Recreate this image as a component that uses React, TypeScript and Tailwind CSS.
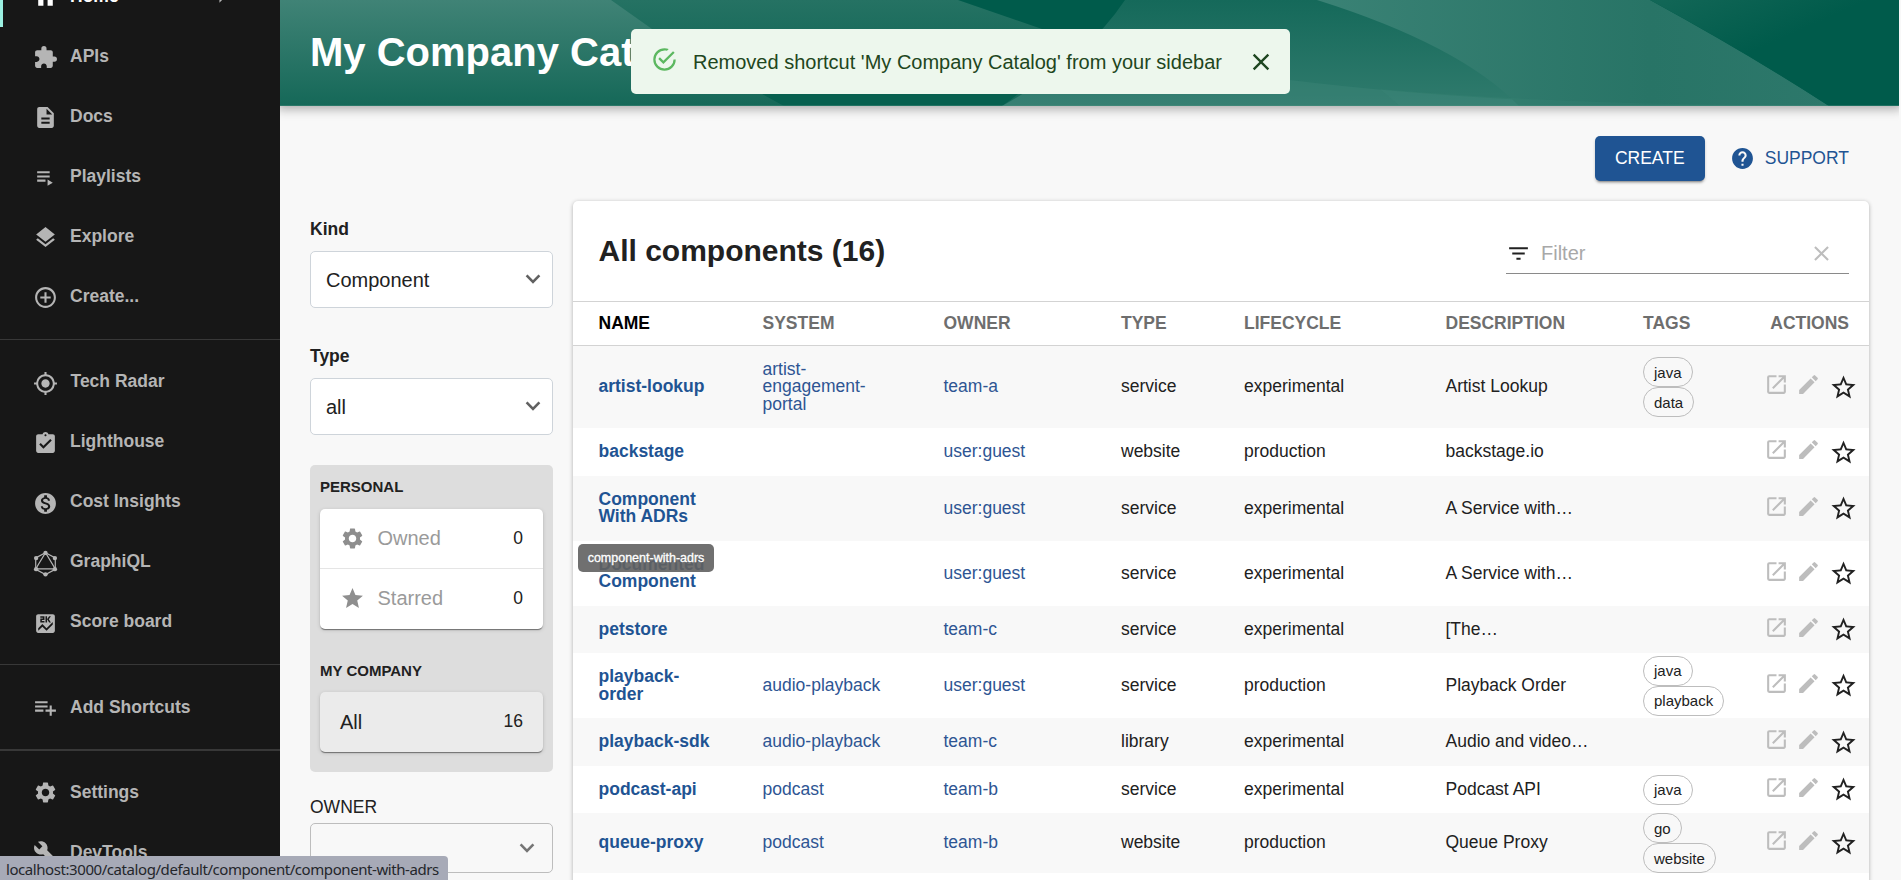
import React from 'react';
import {
  MdAddCircleOutline, MdArrowRight, MdAssignmentTurnedIn, MdBuild, MdClear, MdDescription, MdEdit,
  MdExtension, MdFilterList, MdHelp, MdHome, MdLayers, MdMonetizationOn, MdMyLocation,
  MdOpenInNew, MdScore, MdSettings, MdStar,
} from 'react-icons/md';

type IconType = React.ComponentType<{ className?: string }>;

const PlaylistPlay: IconType = ({ className }) => (
  <svg viewBox="0 0 24 24" fill="currentColor" className={className}>
    <path d="M4 10h12v2H4zm0-4h12v2H4zm0 8h8v2H4zm10 0v6l5-3z" />
  </svg>
);

const PlaylistAdd: IconType = ({ className }) => (
  <svg viewBox="0 0 24 24" fill="currentColor" className={className}>
    <path d="M14 10H2v2h12v-2zm0-4H2v2h12V6zm4 8v-4h-2v4h-4v2h4v4h2v-4h4v-2h-4zM2 16h8v-2H2v2z" />
  </svg>
);

const GraphiQL: IconType = ({ className }) => (
  <svg viewBox="0 0 24 24" className={className} overflow="visible">
    <g fill="none" stroke="currentColor" strokeWidth="1.1">
      <path d="M12 1.6 21.4 6.6V17.6L12 22.6 2.6 17.6V6.6Z" />
      <path d="M12 1.6 21.4 17.2H2.6Z" />
    </g>
    <g fill="currentColor">
      <circle cx="12" cy="1.8" r="2.1" />
      <circle cx="21" cy="6.8" r="2.1" />
      <circle cx="21" cy="17.4" r="2.1" />
      <circle cx="12" cy="22.4" r="2.1" />
      <circle cx="3" cy="17.4" r="2.1" />
      <circle cx="3" cy="6.8" r="2.1" />
    </g>
  </svg>
);

const StarBorder: IconType = ({ className }) => (
  <svg viewBox="0 0 24 24" fill="currentColor" className={className}>
    <path d="M22 9.24l-7.19-.62L12 2 9.19 8.63 2 9.24l5.46 4.73L5.82 21 12 17.27 18.18 21l-1.63-7.03L22 9.24zM12 15.4l-3.76 2.27 1-4.28-3.32-2.88 4.38-.38L12 6.1l1.71 4.04 4.38.38-3.32 2.88 1 4.28L12 15.4z" />
  </svg>
);

const SuccessOutlined: IconType = ({ className }) => (
  <svg viewBox="0 0 24 24" fill="currentColor" className={className}>
    <path d="M20,12A8,8 0 0,1 12,20A8,8 0 0,1 4,12A8,8 0 0,1 12,4C12.76,4 13.5,4.11 14.2,4.31L15.77,2.74C14.61,2.26 13.34,2 12,2A10,10 0 0,0 2,12A10,10 0 0,0 12,22A10,10 0 0,0 22,12M7.91,10.08L6.5,11.5L11,16L21,6L19.59,4.58L11,13.17L7.91,10.08Z" />
  </svg>
);

const Chevron: IconType = ({ className }) => (
  <svg viewBox="0 0 16 10" fill="none" stroke="currentColor" strokeWidth="2.6" className={className}>
    <path d="M1.6 1.4 8 7.8l6.4-6.4" />
  </svg>
);

function NavItem({ icon: Icon, label, text = 'pb-0' }: { icon: IconType; label: string; text?: string }) {
  return (
    <a className="flex h-[60px] items-center pl-[33px]">
      <Icon className="size-[25px] shrink-0" />
      <span className={`ml-[12px] ${text}`}>{label}</span>
    </a>
  );
}

function Sidebar() {
  return (
    <nav className="w-[280px] shrink-0 overflow-hidden bg-[#171717] text-[17.5px] font-bold text-[#b5b5b5]">
      <div className="-mt-[33px] flex h-[60px] items-center border-l-[3px] border-[#9bf0e1] pl-[30px] text-white">
        <MdHome className="size-[25px]" />
        <span className="ml-[12px] pb-px">Home</span>
        <MdArrowRight className="ml-[90px] size-[25px] text-[#b5b5b5]" />
      </div>
      <NavItem icon={MdExtension} label="APIs" text="pb-px" />
      <NavItem icon={MdDescription} label="Docs" text="pb-px" />
      <NavItem icon={PlaylistPlay} label="Playlists" text="pb-px" />
      <NavItem icon={MdLayers} label="Explore" text="pb-px" />
      <NavItem icon={MdAddCircleOutline} label="Create..." text="pb-px" />
      <hr className="mt-[12px] mb-[13px] border-[#383838]" />
      <NavItem icon={MdMyLocation} label="Tech Radar" text="pb-[3px] pl-[0.5px]" />
      <NavItem icon={MdAssignmentTurnedIn} label="Lighthouse" text="pb-[3px]" />
      <NavItem icon={MdMonetizationOn} label="Cost Insights" text="pb-[3px]" />
      <NavItem icon={GraphiQL} label="GraphiQL" text="pb-[3px]" />
      <NavItem icon={MdScore} label="Score board" text="pb-[3px]" />
      <hr className="mt-[11px] mb-[12px] border-[#383838]" />
      <NavItem icon={PlaylistAdd} label="Add Shortcuts" />
      <hr className="mt-[12px] mb-[11px] border-t-2 border-[#383838]" />
      <NavItem icon={MdSettings} label="Settings" />
      <NavItem icon={MdBuild} label="DevTools" />
    </nav>
  );
}

function HeaderArt() {
  return (
    <svg className="absolute inset-0 size-full" viewBox="0 0 1619 106" preserveAspectRatio="none">
      <defs>
        <linearGradient id="left" x1="0" y1="0" x2="0" y2="1">
          <stop offset="0" stopColor="#408376" />
          <stop offset="1" stopColor="#156858" />
        </linearGradient>
        <linearGradient id="mid" x1="0" y1="0" x2="0" y2="1">
          <stop offset="0" stopColor="#257263" />
          <stop offset="1" stopColor="#07604f" />
        </linearGradient>
        <linearGradient id="right" x1="0" y1="0" x2="0" y2="1">
          <stop offset="0" stopColor="#15695a" />
          <stop offset="1" stopColor="#307b6d" />
        </linearGradient>
        <linearGradient id="band" x1="0" y1="0" x2="1" y2="0">
          <stop offset="0" stopColor="#3a8275" />
          <stop offset="0.65" stopColor="#287466" />
          <stop offset="1" stopColor="#2d786b" />
        </linearGradient>
        <linearGradient id="corner" gradientUnits="userSpaceOnUse" x1="1370" y1="0" x2="1406" y2="81">
          <stop offset="0" stopColor="#136757" />
          <stop offset="1" stopColor="#005b4b" />
        </linearGradient>
      </defs>
      <rect width="1619" height="106" fill="#005b4b" />
      <path d="M0 0H678L762 29Q790 60 800 106H0Z" fill="url(#mid)" />
      <path d="M482 94L504 106H800V60H430Z" fill="#07604f" />
      <path d="M0 0H331L372 29Q430 66 504 106H0Z" fill="url(#left)" />
      <path d="M845 0H1250V106H722Q805 60 845 0Z" fill="url(#right)" />
      <path d="M722 106Q740 94 760 74Q900 72 1010 80Q1190 102 1420 106Z" fill="#4b9082" fillOpacity="0.25" />
      <path d="M1037 0H1370Q1470 55 1549 106H1239Q1180 45 1037 0Z" fill="url(#band)" />
      <path d="M1100 89Q1240 101 1400 104L1549 106H1120Z" fill="#4b9082" fillOpacity="0.12" />
      <path d="M1370 0H1619V106H1549Q1466 52 1370 0Z" fill="url(#corner)" />
      <rect y="105" width="1619" height="1" fill="#4b9082" fillOpacity="0.4" />
    </svg>
  );
}

function Select({ value }: { value: string }) {
  return (
    <div className="flex h-[57px] items-center justify-between rounded-[5px] border border-[#ced4da] bg-white pr-[11px] pl-[15px] text-[20px]">
      <span>{value}</span>
      <Chevron className="mb-px h-[10px] w-[16px] text-[#616161]" />
    </div>
  );
}

const cardShadow = 'shadow-[0_2px_1px_-1px_rgba(0,0,0,0.3),0_1px_1px_rgba(0,0,0,0.2),0_1px_4px_rgba(0,0,0,0.14)]';

function Filters() {
  return (
    <aside className="w-[243px] shrink-0 pt-[17px]">
      <div className="mb-[11px] text-[17.5px] leading-[22px] font-bold">Kind</div>
      <Select value="Component" />
      <div className="mt-[37px] mb-[11px] text-[17.5px] leading-[22px] font-bold">Type</div>
      <Select value="all" />
      <div className="mt-[30px] h-[307px] rounded-[5px] bg-[#dddddd] px-[10px] pt-[12px]">
        <div className="text-[15px] leading-[20px] font-bold">PERSONAL</div>
        <div className={`mt-[12px] h-[120px] rounded-[5px] bg-white ${cardShadow}`}>
          <div className="flex h-[60px] items-center border-b border-[#e5e5e5] px-[20px] text-[#9a9a9a]">
            <MdSettings className="size-[25px] text-[#8e8e8e]" />
            <span className="ml-[12.5px] pb-[2px] text-[20px]">Owned</span>
            <span className="ml-auto text-[17.5px] text-[#212121]">0</span>
          </div>
          <div className="flex h-[60px] items-center px-[20px] text-[#9a9a9a]">
            <MdStar className="mb-px size-[25px] text-[#8e8e8e]" />
            <span className="ml-[12.5px] pb-[3px] text-[20px]">Starred</span>
            <span className="ml-auto pb-[2px] text-[17.5px] text-[#212121]">0</span>
          </div>
        </div>
        <div className="mt-[32px] text-[15px] leading-[20px] font-bold">MY COMPANY</div>
        <div className={`mt-[11px] flex h-[60px] items-center justify-between rounded-[5px] bg-[#ebebeb] px-[20px] text-[20px] ${cardShadow}`}>
          <span>All</span>
          <span className="pb-px text-[17.5px]">16</span>
        </div>
      </div>
      <div className="mt-[23px] text-[17.5px] leading-[24px]">OWNER</div>
      <div className="mt-[4px] flex h-[50px] items-center justify-end rounded-[5px] border border-[#bdbdbd] pr-[17px]">
        <Chevron className="h-[10px] w-[16px] text-[#757575]" />
      </div>
    </aside>
  );
}

const columns = 'grid grid-cols-[164px_181px_177.5px_123px_201.5px_197.5px_123px_1fr] items-center pl-[25.5px]';

interface Row {
  h: string;
  name: string;
  lift?: boolean;
  system?: string;
  owner: string;
  type: string;
  lifecycle: string;
  description: string;
  tags?: string[];
}

const rows: Row[] = [
  { h: 'h-[82px]', name: 'artist-lookup', system: 'artist-\nengagement-\nportal', owner: 'team-a', type: 'service', lifecycle: 'experimental', description: 'Artist Lookup', tags: ['java', 'data'] },
  { h: 'h-[48px]', name: 'backstage', owner: 'user:guest', type: 'website', lifecycle: 'production', description: 'backstage.io' },
  { h: 'h-[65px]', name: 'Component\nWith ADRs', lift: true, owner: 'user:guest', type: 'service', lifecycle: 'experimental', description: 'A Service with…' },
  { h: 'h-[65px]', name: 'Documented\nComponent', lift: true, owner: 'user:guest', type: 'service', lifecycle: 'experimental', description: 'A Service with…' },
  { h: 'h-[47px]', name: 'petstore', owner: 'team-c', type: 'service', lifecycle: 'experimental', description: '[The…' },
  { h: 'h-[65px]', name: 'playback-\norder', system: 'audio-playback', owner: 'user:guest', type: 'service', lifecycle: 'production', description: 'Playback Order', tags: ['java', 'playback'] },
  { h: 'h-[48px]', name: 'playback-sdk', system: 'audio-playback', owner: 'team-c', type: 'library', lifecycle: 'experimental', description: 'Audio and video…' },
  { h: 'h-[47px]', name: 'podcast-api', system: 'podcast', owner: 'team-b', type: 'service', lifecycle: 'experimental', description: 'Podcast API', tags: ['java'] },
  { h: 'h-[60px]', name: 'queue-proxy', system: 'podcast', owner: 'team-b', type: 'website', lifecycle: 'production', description: 'Queue Proxy', tags: ['go', 'website'] },
];

function ComponentTable() {
  return (
    <section className="mb-[-40px] flex h-[720px] min-w-0 flex-1 flex-col rounded-[5px] bg-white shadow-[0_1px_4px_rgba(0,0,0,0.3)]">
      <div className="flex h-[100px] shrink-0 justify-between pr-[20px] pl-[25.5px]">
        <h2 className="pt-[32px] text-[30px] leading-[36px] font-bold">All components (16)</h2>
        <div className="mt-[35px] flex h-[38px] w-[343px] items-center border-b border-[#8a8a8a] pb-[3px] text-[20px] text-[#a8a8a8]">
          <MdFilterList className="size-[25px] text-[#212121]" />
          <span className="ml-[10px]">Filter</span>
          <MdClear className="mr-[15px] ml-auto size-[25px] text-[#bdbdbd]" />
        </div>
      </div>
      <div className={`${columns} h-[45px] shrink-0 border-y border-[#d3d3d3] font-bold text-[#6e6e6e]`}>
        <span className="text-black">NAME</span>
        <span>SYSTEM</span>
        <span>OWNER</span>
        <span>TYPE</span>
        <span>LIFECYCLE</span>
        <span>DESCRIPTION</span>
        <span>TAGS</span>
        <span className="pr-[20px] text-right">ACTIONS</span>
      </div>
      <div className="leading-[17.5px]">
        {rows.map(row => (
          <div key={row.name} className={`${columns} ${row.h} odd:bg-[#f8f8f8]`}>
            <a className={`font-bold whitespace-pre-line text-[#1f5493] ${row.lift ? 'pb-px' : ''}`}>{row.name}</a>
            <a className="whitespace-pre-line text-[#2e5593]">{row.system}</a>
            <a className="text-[#2e5593]">{row.owner}</a>
            <span>{row.type}</span>
            <span>{row.lifecycle}</span>
            <span>{row.description}</span>
            <span className="flex flex-col items-start">
              {row.tags?.map(tag => (
                <span key={tag} className="flex h-[30px] items-center rounded-full border border-[#bdbdbd] px-[10px] pt-px text-[15px]">
                  {tag}
                </span>
              ))}
            </span>
            <span className="flex items-center text-[#bdbdbd]">
              <MdOpenInNew className="mb-[5px] ml-[-2px] size-[25px]" />
              <MdEdit className="mb-[5px] ml-[7px] size-[25px]" />
              <StarBorder className="ml-[8px] size-[29px] text-[#212121]" />
            </span>
          </div>
        ))}
      </div>
    </section>
  );
}

function Toast() {
  return (
    <div className="absolute top-[29px] left-[630.5px] flex h-[65px] w-[659px] items-center rounded-[5px] bg-[#edf7ed] pr-[15px] pl-[20px] text-[20px] text-[#1e4620]">
      <SuccessOutlined className="mb-[5px] size-[27px] text-[#5cb860]" />
      <span className="ml-[15.5px]">Removed shortcut 'My Company Catalog' from your sidebar</span>
      <MdClear className="ml-auto size-[28px]" />
    </div>
  );
}

export default function App() {
  return (
    <div className="relative flex h-[880px] w-[1901px] overflow-hidden bg-[#f8f8f8] font-['Liberation_Sans',Arial,sans-serif] text-[17.5px] text-[#212121]">
      <Sidebar />
      <div className="flex w-[1619px] shrink-0 flex-col">
        <header className="relative flex h-[106px] shrink-0 items-center pb-[2px] pl-[30px] shadow-[0_0_10px_3px_rgba(20,20,20,0.35)] [clip-path:inset(0_0_-20px_0)]">
          <HeaderArt />
          <h1 className="relative text-[40px] leading-none font-bold text-white">My Company Catalog</h1>
        </header>
        <main className="flex flex-col pr-[30px] pl-[30px]">
          <div className="flex h-[95px] items-start justify-end pt-[30px] text-[17.5px]">
            <button className="h-[45px] w-[110px] rounded-[5px] bg-[#1f5493] text-white shadow-[0_3px_2px_-2px_rgba(0,0,0,0.3),0_2px_3px_rgba(0,0,0,0.2)]">
              CREATE
            </button>
            <button className="ml-[25px] flex h-[45px] items-center pr-[20px] text-[#1f5493]">
              <MdHelp className="size-[25px]" />
              <span className="ml-[10px]">SUPPORT</span>
            </button>
          </div>
          <div className="flex items-start gap-[20px]">
            <Filters />
            <ComponentTable />
          </div>
        </main>
      </div>
      <Toast />
      <div className="absolute top-[544px] left-[578px] flex h-[28px] w-[136px] items-center justify-center rounded-[5px] bg-[#616161]/90 text-[12.5px] text-white [-webkit-text-stroke:0.3px_white]">
        component-with-adrs
      </div>
      <div className="absolute bottom-0 left-0 flex h-[24px] w-[448px] items-center rounded-tr-[4px] bg-[#a7aab7] pt-[3px] pl-[6px] font-['Noto_Sans',sans-serif] text-[15px] tracking-[-0.43px] whitespace-nowrap text-[#24262b]">
        localhost:3000/catalog/default/component/component-with-adrs
      </div>
    </div>
  );
}
